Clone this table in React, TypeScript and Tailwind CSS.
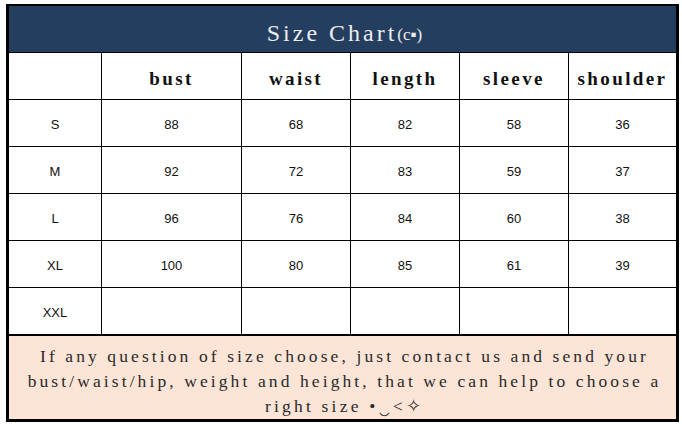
const columns = ["", "bust", "waist", "length", "sleeve", "shoulder"]

const rows = [
    ["S", "88", "68", "82", "58", "36"],
    ["M", "92", "72", "83", "59", "37"],
    ["L", "96", "76", "84", "60", "38"],
    ["XL", "100", "80", "85", "61", "39"],
    ["XXL", "", "", "", "", ""],
]

const gridCols = "grid grid-cols-[93px_140px_109px_109px_109px_107px]"

export default function App() {
    return (
        <div className="w-[682px] h-[424px] bg-white overflow-hidden pl-[6px] pt-[4px]">
            <div className="w-[673px] h-[418px] border-x-[3px] border-t-2 border-b-[3px] border-black flex flex-col">
                {/* Title bar */}
                <div className="h-[47px] bg-[#243e60] border-b border-black flex items-center justify-center text-[#ececec] font-['Liberation_Serif',serif] pt-[8px] pl-[4px]">
                    <span className="text-[24px] leading-none tracking-[3px]">Size Chart</span>
                    <span className="text-[17px] leading-none mt-[2px]">(c▪)</span>
                </div>

                {/* Header row */}
                <div className={gridCols}>
                    {columns.map((c, i) => (
                        <div
                            key={i}
                            className={`h-[47px] border-b border-black flex items-center justify-center pt-[6px] text-[19px] font-semibold tracking-[2.4px] text-[#111] font-['Liberation_Serif',serif] ${i < 5 ? "border-r" : ""}`}
                        >
                            {c}
                        </div>
                    ))}
                </div>

                {/* Size rows */}
                {rows.map((r, ri) => (
                    <div key={ri} className={gridCols}>
                        {r.map((v, i) => (
                            <div
                                key={i}
                                className={`flex items-center justify-center pt-[4px] text-[13px] text-[#111] font-['Liberation_Sans',sans-serif] border-black ${i < 5 ? "border-r" : ""} ${ri === 4 ? "h-[48px] border-b-2" : "h-[47px] border-b"}`}
                            >
                                {v}
                            </div>
                        ))}
                    </div>
                ))}

                {/* Note */}
                <div className="flex-1 bg-[#fce4d6] flex flex-col items-center justify-center text-center text-[17.5px] leading-[25px] text-[#2a2a2a] font-['Liberation_Serif',serif] pt-[8px] pl-[4px]">
                    <p className="whitespace-nowrap tracking-[3.1px]">If any question of size choose, just contact us and send your</p>
                    <p className="whitespace-nowrap tracking-[3.1px]">bust/waist/hip, weight and height, that we can help to choose a</p>
                    <p className="whitespace-nowrap tracking-[3.2px]">right size •‿&lt;✧</p>
                </div>
            </div>
        </div>
    )
}
